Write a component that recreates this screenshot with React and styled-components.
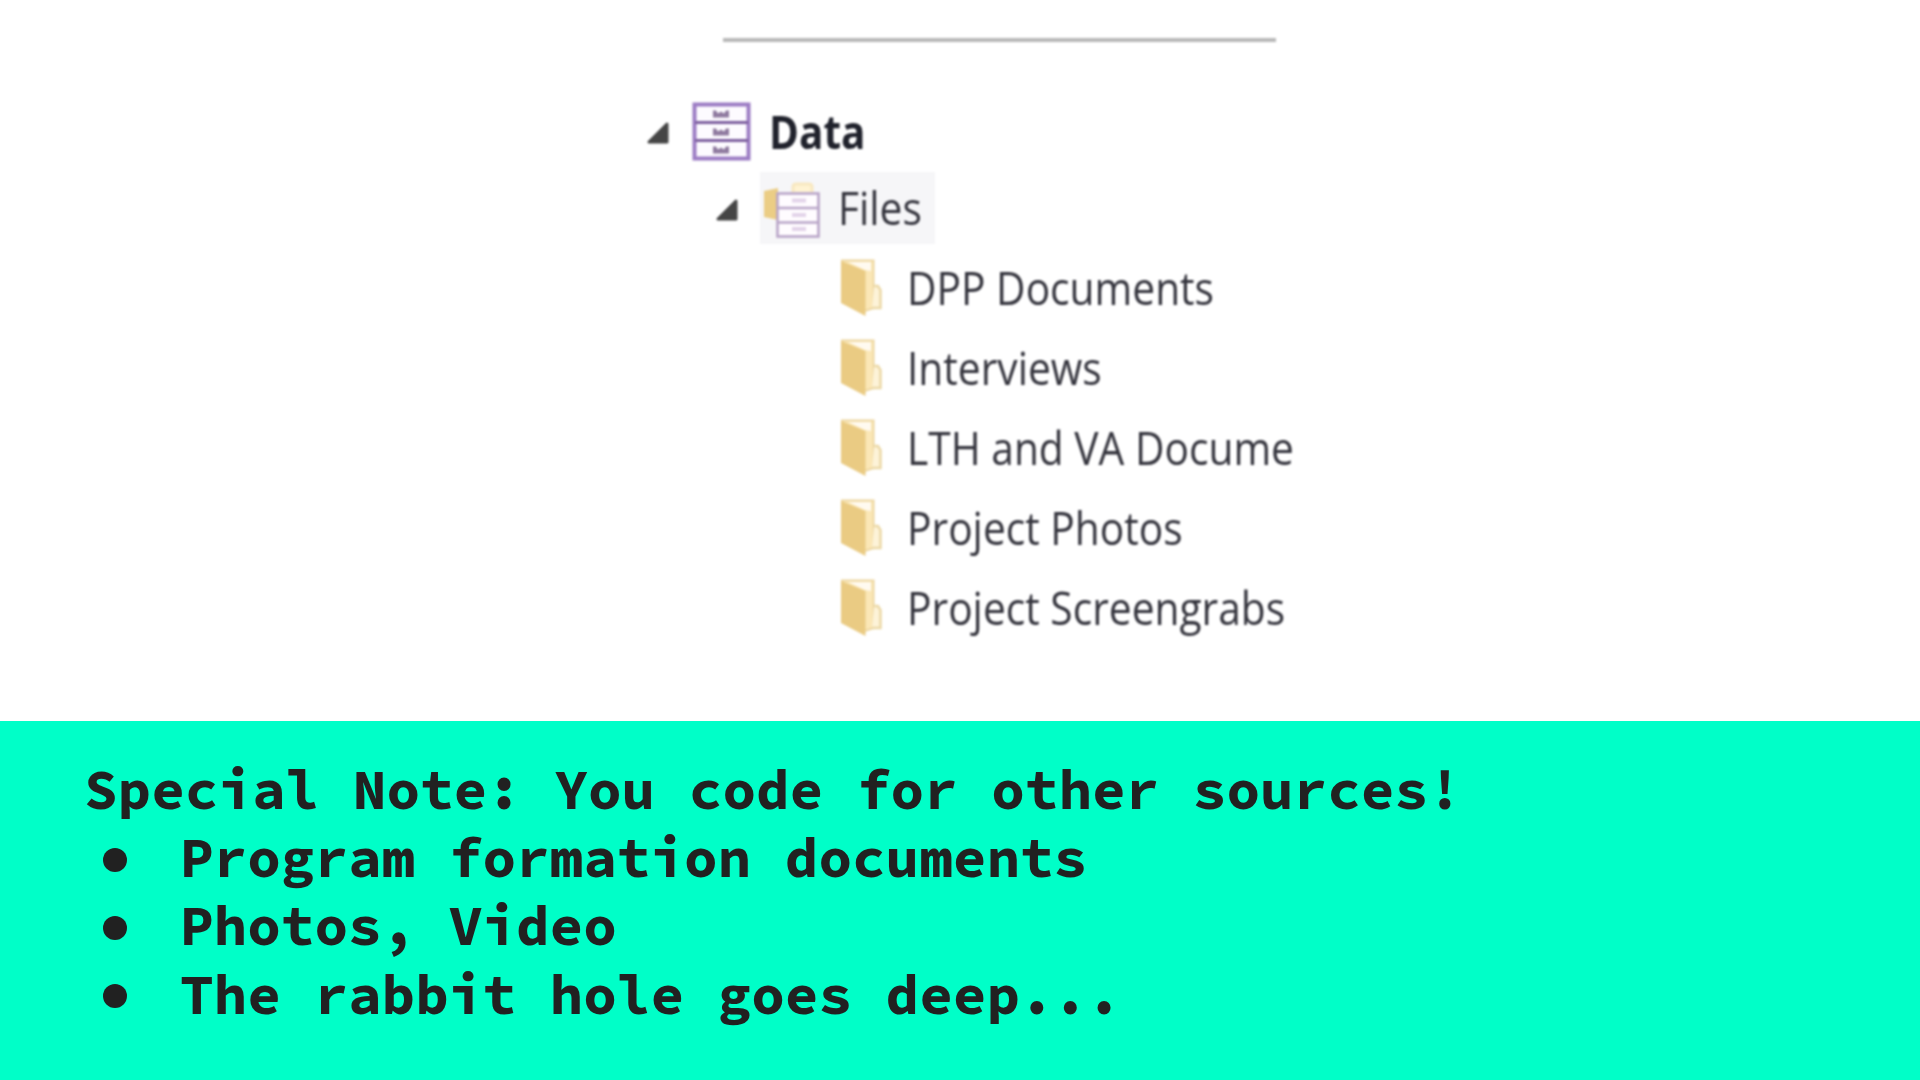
import React from "react";
import styled, { createGlobalStyle } from "styled-components";

const GlobalStyle = createGlobalStyle`
  body {
    margin: 0;
    background: #ffffff;
  }
`;

const Slide = styled.div`
  display: flex;
  flex-direction: column;
  width: 1920px;
  height: 1080px;
  overflow: hidden;
`;

const TreePane = styled.div`
  display: flex;
  flex-direction: column;
  height: 721px;
  box-sizing: border-box;
  padding: 38px 0 0 640px;
  filter: blur(1.1px);
`;
const Rule = styled.div`
  width: 553px;
  height: 4px;
  margin-left: 83px;
  background: #b8b8b8;
`;

const Tree = styled.div`
  display: flex;
  flex-direction: column;
  padding-top: 50px;
`;
const RootRow = styled.div`
  display: flex;
  align-items: center;
  height: 80px;
  padding-left: 6px;
`;
const BranchRow = styled.div`
  display: flex;
  align-items: center;
  height: 72px;
  margin-bottom: 4px;
  padding-left: 75px;
`;
const Selected = styled.div`
  display: flex;
  align-items: center;
  width: 175px;
  height: 72px;
  margin-left: 21px;
  background: #f6f6f8;
`;
const LeafRow = styled.div`
  display: flex;
  align-items: center;
  height: 80px;
  padding-left: 200px;
`;
const ArrowBox = styled.span`
  display: flex;
  margin-top: ${(props) => props.$drop || 0}px;
`;
const IconGap = styled.span`
  display: flex;
  margin-left: ${(props) => props.$left}px;
`;

const Label = styled.span`
  display: inline-block;
  margin-left: ${(props) => props.$gap}px;
  padding-bottom: 3px;
  font-family: "Open Sans", "Noto Sans", sans-serif;
  font-size: 46px;
  font-weight: ${(props) => (props.$bold ? 700 : 430)};
  line-height: 64px;
  color: ${(props) => (props.$bold ? "#20222c" : "#34343d")};
  white-space: nowrap;
  transform: scaleX(${(props) => props.$squeeze || 0.885});
  transform-origin: left center;
`;

const Note = styled.div`
  display: flex;
  flex-direction: column;
  flex: 1;
  padding: 34px 0 0 84px;
  background: #00ffc8;
  color: #212121;
  font-family: "Source Code Pro", "Liberation Mono", monospace;
  font-size: 56px;
  font-weight: 700;
  line-height: 68.2px;
  white-space: nowrap;
`;
const NoteTitle = styled.p`
  margin: 0;
`;
const NoteList = styled.ul`
  margin: 0;
  padding: 0;
  list-style: none;
`;
const NoteItem = styled.li`
  display: flex;
  align-items: center;
`;
const Bullet = styled.span`
  width: 24px;
  height: 24px;
  margin: 5px 53px 0 19px;
  border-radius: 50%;
  background: #212121;
`;

const leaves = [
  "DPP Documents",
  "Interviews",
  "LTH and VA Docume",
  "Project Photos",
  "Project Screengrabs",
];

const notes = [
  "Program formation documents",
  "Photos, Video",
  "The rabbit hole goes deep...",
];

function Arrow() {
  return (
    <svg width="24" height="24" viewBox="0 0 24 24">
      <path
        d="M21 3V21H3Z"
        fill="#454545"
        stroke="#454545"
        strokeWidth="3"
        strokeLinejoin="round"
      />
    </svg>
  );
}

function CabinetIcon() {
  return (
    <svg width="60" height="60" viewBox="0 0 60 60">
      <rect
        x="2.5"
        y="2.5"
        width="54"
        height="54"
        fill="#fdfbff"
        stroke="#9c7cc4"
        strokeWidth="4"
      />
      <path d="M3 20.500H56M3 38.500H56" stroke="#7d5f9f" strokeWidth="2.8" />
      {[8.5, 26.5, 44.5].map((y) => (
        <g key={y} transform={`translate(21 ${y})`}>
          <path d="M0 0H3L5 3L8 1L11 3L13 0H16V7H0Z" fill="#8f7a9f" />
        </g>
      ))}
    </svg>
  );
}

function FilesIcon() {
  return (
    <svg width="60" height="60" viewBox="0 0 60 60">
      <path d="M33 14V9Q33 6 36 6H49Q52 6 52 9V14" fill="#fff3d2" stroke="#f8e8c0" strokeWidth="3" />
      <path d="M4 13L18 10V42L4 39Z" fill="#ebcd85" />
      <rect
        x="17.5"
        y="15.500"
        width="41"
        height="43"
        fill="#fffcff"
        stroke="#b9a5c8"
        strokeWidth="2.6"
      />
      <path d="M18 30H58M18 44.500H58" stroke="#b9a5c8" strokeWidth="2.4" />
      <path d="M32 22.500H46M32 37H46M32 51H46" stroke="#e3d4e9" strokeWidth="4" />
    </svg>
  );
}

function FolderIcon() {
  return (
    <svg width="44" height="60" viewBox="0 0 44 60">
      <path
        d="M2 2.500H33.500V50L25 53L2 44Z"
        fill="#fbe7b6"
        stroke="#edd7a2"
        strokeWidth="2"
      />
      <path d="M8 4H31V13L25 12Z" fill="#fffaf0" />
      <path
        d="M34 28H38L40.500 32V50H32"
        fill="#fdf3d8"
        stroke="#ecd9a8"
        strokeWidth="2.500"
      />
      <path d="M1 3L25.500 13V58L1 45Z" fill="#eacb83" />
    </svg>
  );
}

function App() {
  return (
    <Slide>
      <GlobalStyle />
      <TreePane>
        <Rule />
        <Tree>
          <RootRow>
            <ArrowBox $drop={2}>
              <Arrow />
            </ArrowBox>
            <IconGap $left={22}>
              <CabinetIcon />
            </IconGap>
            <Label $bold $gap={17} $squeeze={0.88}>
              Data
            </Label>
          </RootRow>
          <BranchRow>
            <ArrowBox $drop={4}>
              <Arrow />
            </ArrowBox>
            <Selected>
              <FilesIcon />
              <Label $gap={18}>Files</Label>
            </Selected>
          </BranchRow>
          {leaves.map((leaf) => (
            <LeafRow key={leaf}>
              <FolderIcon />
              <Label $gap={23}>{leaf}</Label>
            </LeafRow>
          ))}
        </Tree>
      </TreePane>
      <Note>
        <NoteTitle>Special Note: You code for other sources!</NoteTitle>
        <NoteList>
          {notes.map((note) => (
            <NoteItem key={note}>
              <Bullet />
              {note}
            </NoteItem>
          ))}
        </NoteList>
      </Note>
    </Slide>
  );
}

export default App;
